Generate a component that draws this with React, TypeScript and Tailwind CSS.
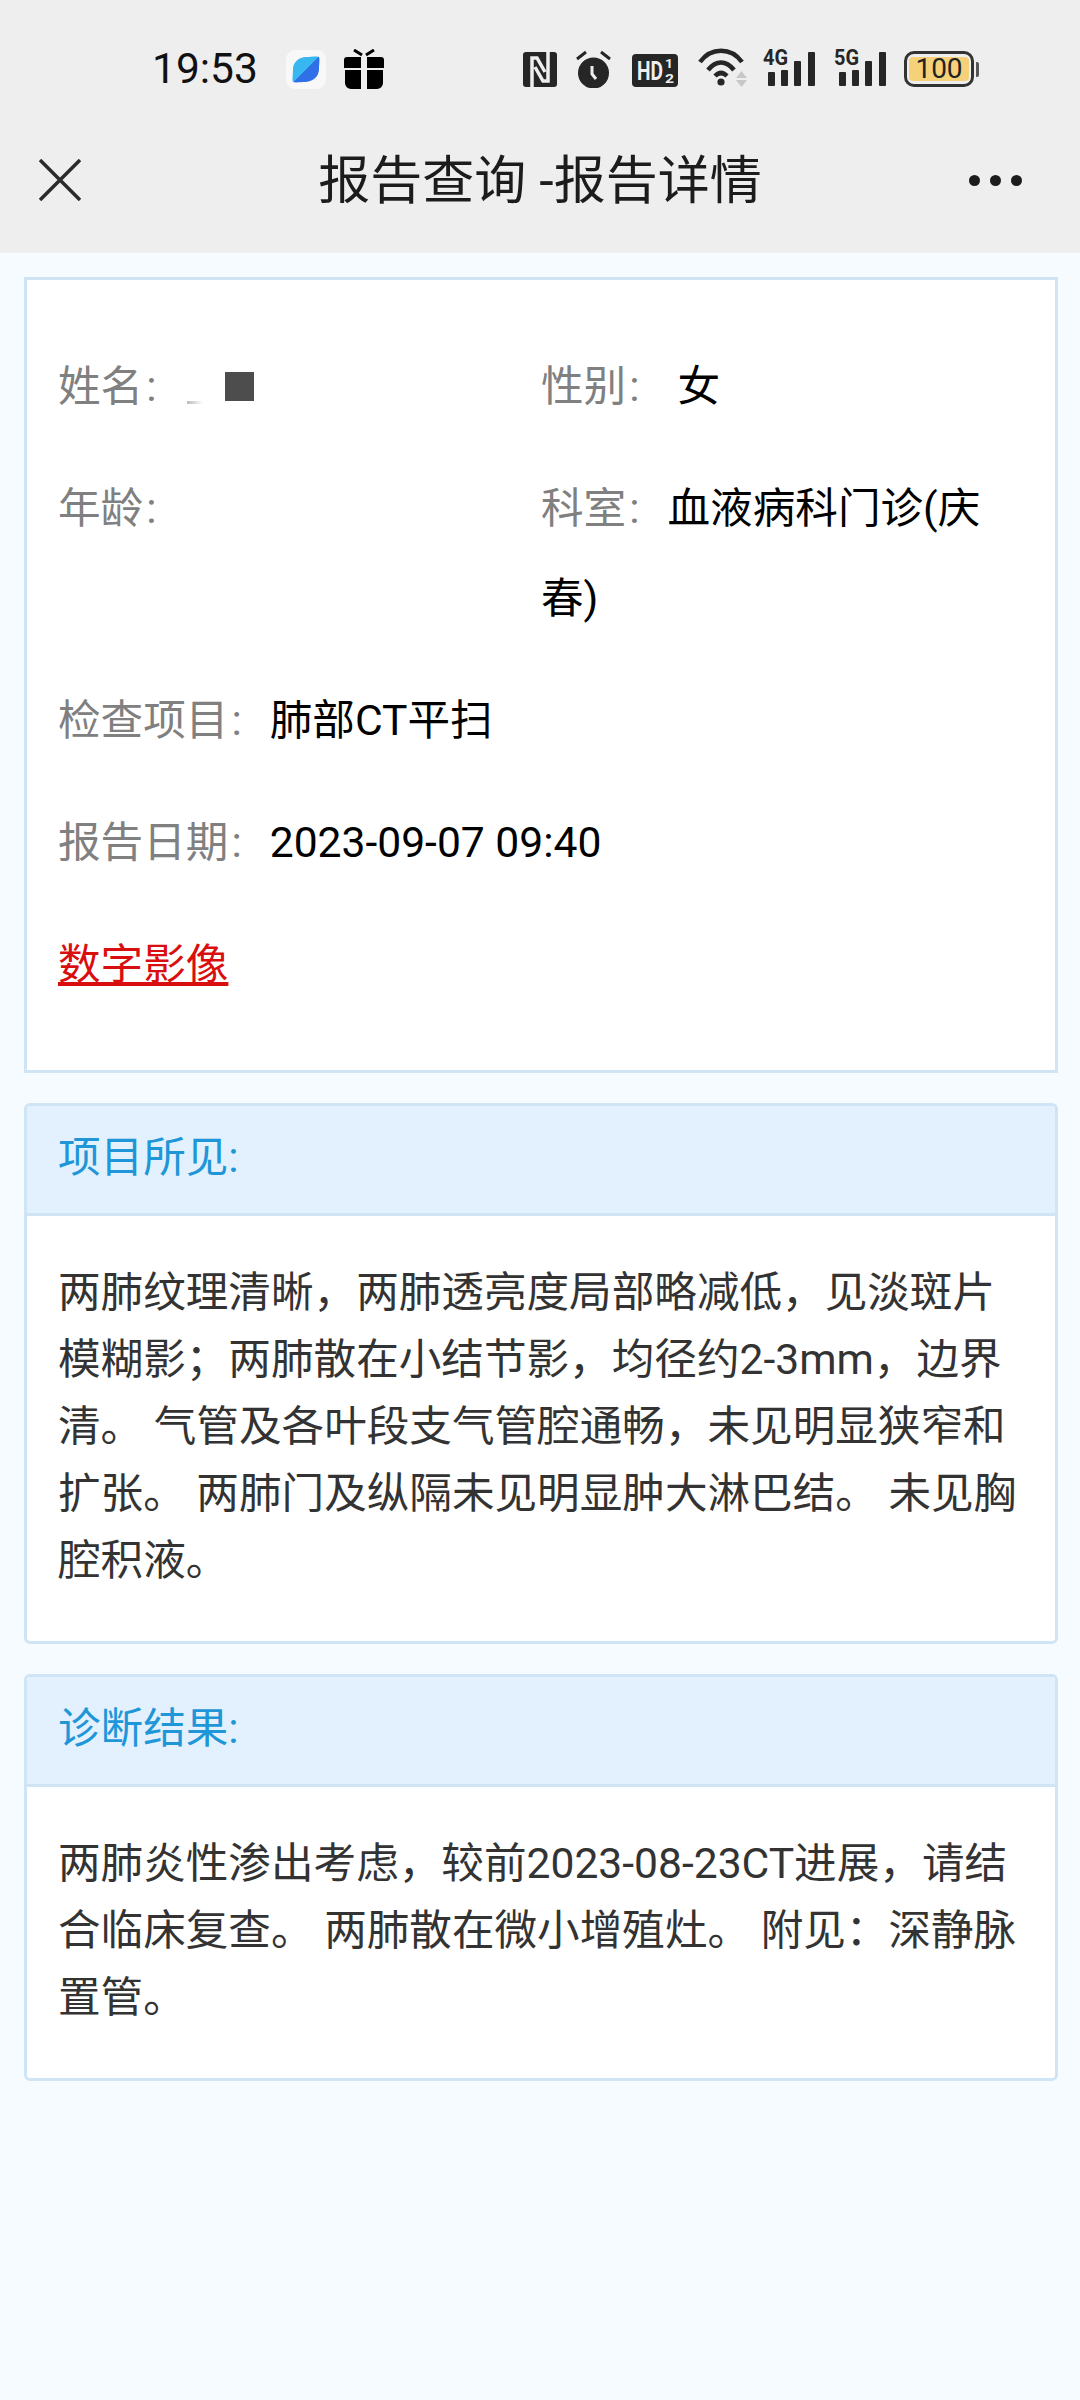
const FONT = "font-['Roboto','Noto_Sans_CJK_SC',sans-serif]";

function NfcIcon() {
  return (
    <svg width="34" height="35" viewBox="0 0 34 35" className="shrink-0">
      <rect width="34" height="35" rx="3" fill="#262626" />
      <path d="M9 35V6h5l8 14M25 0v29h-5l-8-14" fill="none" stroke="#eeeeee" strokeWidth="3.5" />
    </svg>
  );
}

function AlarmIcon() {
  return (
    <svg width="35" height="38" viewBox="0 0 35 38" className="shrink-0">
      <circle cx="17.5" cy="23" r="15.5" fill="#262626" />
      <path d="M16 16v8l4 5" fill="none" stroke="#eeeeee" strokeWidth="3" />
      <path d="M1 9l9-7M34 9l-9-7" fill="none" stroke="#262626" strokeWidth="3" />
    </svg>
  );
}

function HdIcon() {
  return (
    <svg width="46" height="33" viewBox="0 0 46 33" className="shrink-0 mt-[3px]">
      <rect width="46" height="33" rx="4" fill="#262626" />
      <text x="5" y="26" fontFamily="Roboto" fontWeight="700" fontSize="25" textLength="26" lengthAdjust="spacingAndGlyphs" fill="#eeeeee">HD</text>
      <text x="33" y="14" fontFamily="Roboto" fontWeight="700" fontSize="13" textLength="8" lengthAdjust="spacingAndGlyphs" fill="#eeeeee">1</text>
      <text x="33" y="29" fontFamily="Roboto" fontWeight="700" fontSize="13" textLength="9" lengthAdjust="spacingAndGlyphs" fill="#eeeeee">2</text>
    </svg>
  );
}

function WifiIcon() {
  return (
    <svg width="49" height="39" viewBox="0 0 49 39" className="shrink-0 mb-[3px]">
      <path d="M2 14C13 -1 33 -1 44 14" fill="none" stroke="#262626" strokeWidth="4.5" />
      <path d="M10 22c8-10 18-10 26 0" fill="none" stroke="#262626" strokeWidth="4.5" />
      <path d="M17 28c4-4 8-4 12 0" fill="none" stroke="#262626" strokeWidth="4.5" />
      <circle cx="23" cy="34" r="3.6" fill="#262626" />
      <path d="M38 30l5.5-7 5.5 7zM38 32h11l-5.5 7z" fill="#c8c8c8" />
    </svg>
  );
}

function SignalIcon({ label }: { label: string }) {
  return (
    <svg width="52" height="37" viewBox="0 0 52 37" className="shrink-0 mb-[3px] overflow-visible">
      <text x="0" y="16" fontFamily="Roboto" fontWeight="700" fontSize="22" textLength="25" lengthAdjust="spacingAndGlyphs" fill="#262626">{label}</text>
      <rect x="5" y="23" width="7" height="14" rx="1" fill="#262626" />
      <rect x="18" y="21" width="7" height="16" rx="1" fill="#262626" />
      <rect x="31" y="12" width="7" height="25" rx="1" fill="#262626" />
      <rect x="45" y="3" width="7" height="34" rx="1" fill="#262626" />
    </svg>
  );
}

function BatteryIcon() {
  return (
    <div className="flex items-center shrink-0">
      <div className="w-[70px] h-[36px] rounded-[10px] border-[3px] border-[#333333] px-[2px] py-[3px] bg-[#eeeeee]">
        <div className="h-full rounded-[4px] bg-[#f5d27a] flex items-center justify-center font-['Roboto',sans-serif] text-[28px] leading-none text-[#222222]">
          100
        </div>
      </div>
      <div className="ml-[2px] w-[3px] h-[15px] rounded-r-[2px] bg-[#555555]" />
    </div>
  );
}

function InfoLabel({ children }: { children: string }) {
  return (
    <span className="text-[#808080]">
      {children}
      <span className="ml-[3px]">:</span>
    </span>
  );
}

function Panel({ title, text }: { title: string; text: string }) {
  return (
    <section className="ml-[24px] mr-[22px] mt-[30px] border-[3px] border-[#cfe5f6] rounded-[6px] bg-white">
      <div className="h-[110px] pl-[31px] pb-[4px] flex items-center rounded-t-[4px] bg-[#e2f1fd] border-b-[3px] border-[#cfe5f6] text-[#1e96d8]">
        {title}
      </div>
      <p className="px-[31px] pt-[43px] pb-[47px] leading-[67px] text-[#333333]">{text}</p>
    </section>
  );
}

export default function App() {
  return (
    <div className={`${FONT} w-[1080px] min-h-[2400px] bg-[#f5fbff] text-[42.6px]`}>
      {/* 状态栏 + 标题栏 */}
      <header className="h-[253px] bg-[#eeeeee]">
        <div className="h-[138px] pl-[152px] flex items-center">
          <span className="text-[42.5px] leading-[48px] text-[#111111] w-[106px] shrink-0">19:53</span>
          <div className="ml-[28px] w-[40px] h-[39px] rounded-[9px] bg-[#f8f8f8] flex items-center justify-center shrink-0">
            <svg width="28" height="27" viewBox="0 0 28 27">
              <defs>
                <linearGradient id="planet" x1="0" y1="0" x2="1" y2="1">
                  <stop offset="0.5" stopColor="#38b6f0" />
                  <stop offset="0.5" stopColor="#2f6fe8" />
                </linearGradient>
              </defs>
              <path d="M14 1C19 1 25 0 27 1C28 3 27 9 27 13C27 21 20 26 13 26C9 26 3 27 1 26C0 24 1 18 1 13C1 6 7 1 14 1z" fill="url(#planet)" />
            </svg>
          </div>
          <svg width="40" height="40" viewBox="0 0 40 40" className="ml-[18px] shrink-0">
            <path d="M0 11a3 3 0 0 1 3-3h14v11H0zM23 8h14a3 3 0 0 1 3 3v8H23zM1 21h16v19H7a6 6 0 0 1-6-6zM23 21h16v13a6 6 0 0 1-6 6h-10z" fill="#000000" />
            <path d="M10 1l8 5M30 1l-8 5" stroke="#000000" strokeWidth="3" />
          </svg>
          <div className="ml-[139px] flex items-center">
            <NfcIcon />
            <div className="ml-[19px] flex">
              <AlarmIcon />
            </div>
            <div className="ml-[21px] flex">
              <HdIcon />
            </div>
            <div className="ml-[20px] flex">
              <WifiIcon />
            </div>
            <div className="ml-[16px] flex">
              <SignalIcon label="4G" />
            </div>
            <div className="ml-[19px] flex">
              <SignalIcon label="5G" />
            </div>
            <div className="ml-[18px] flex">
              <BatteryIcon />
            </div>
          </div>
        </div>
        <div className="h-[115px] pb-[27px] relative flex items-center justify-center text-[52px] text-[#1c1c1c]">
          <svg width="42" height="42" viewBox="0 0 42 42" className="absolute left-[39px] top-[21px]">
            <path d="M1 1l40 40M41 1L1 41" stroke="#2b2b2b" strokeWidth="3.5" />
          </svg>
          <h1 className="font-normal">报告查询 -报告详情</h1>
          <div className="absolute left-[969px] top-[37px] flex gap-[10px]">
            <span className="w-[11px] h-[11px] rounded-full bg-[#1c1c1c]" />
            <span className="w-[11px] h-[11px] rounded-full bg-[#1c1c1c]" />
            <span className="w-[11px] h-[11px] rounded-full bg-[#1c1c1c]" />
          </div>
        </div>
      </header>

      {/* 基本信息 */}
      <section className="ml-[24px] mr-[22px] mt-[24px] border-[3px] border-[#cfe5f6] bg-white px-[31px] pt-[61px] pb-[61px] leading-[90px] text-black">
        <div className="flex mb-[32px]">
          <div className="w-[483px] flex items-center">
            <InfoLabel>姓名</InfoLabel>
            <span className="ml-[30px] mt-[32px] w-[16px] h-[3px] bg-linear-to-r from-[#bbbbbb] to-white" />
            <span className="ml-[22px] w-[29px] h-[29px] bg-[#4d4d4d]" />
          </div>
          <div>
            <InfoLabel>性别</InfoLabel>
            <span className="ml-[38px]">女</span>
          </div>
        </div>
        <div className="flex mb-[32px]">
          <div className="w-[483px] shrink-0">
            <InfoLabel>年龄</InfoLabel>
          </div>
          <div>
            <InfoLabel>科室</InfoLabel>
            <span className="ml-[28px]">血液病科门诊(庆春)</span>
          </div>
        </div>
        <div className="mb-[32px]">
          <InfoLabel>检查项目</InfoLabel>
          <span className="ml-[28px]">肺部CT平扫</span>
        </div>
        <div className="mb-[32px]">
          <InfoLabel>报告日期</InfoLabel>
          <span className="ml-[28px]">2023-09-07 09:40</span>
        </div>
        <a className="text-[#d90f0f] underline">数字影像</a>
      </section>

      <Panel
        title="项目所见:"
        text="两肺纹理清晰，两肺透亮度局部略减低，见淡斑片模糊影；两肺散在小结节影，均径约2-3mm，边界清。 气管及各叶段支气管腔通畅，未见明显狭窄和扩张。 两肺门及纵隔未见明显肿大淋巴结。 未见胸腔积液。"
      />
      <Panel
        title="诊断结果:"
        text="两肺炎性渗出考虑，较前2023-08-23CT进展，请结合临床复查。 两肺散在微小增殖灶。 附见：深静脉置管。"
      />
    </div>
  );
}
